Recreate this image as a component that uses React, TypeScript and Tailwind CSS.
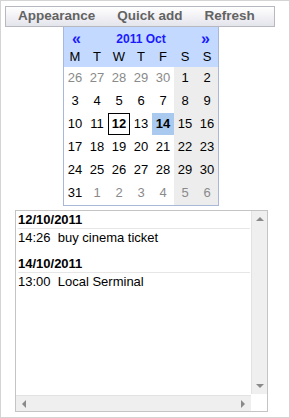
import React from 'react';

const weeks: { d: number; other?: boolean }[][] = [
  [{ d: 26, other: true }, { d: 27, other: true }, { d: 28, other: true }, { d: 29, other: true }, { d: 30, other: true }, { d: 1 }, { d: 2 }],
  [{ d: 3 }, { d: 4 }, { d: 5 }, { d: 6 }, { d: 7 }, { d: 8 }, { d: 9 }],
  [{ d: 10 }, { d: 11 }, { d: 12 }, { d: 13 }, { d: 14 }, { d: 15 }, { d: 16 }],
  [{ d: 17 }, { d: 18 }, { d: 19 }, { d: 20 }, { d: 21 }, { d: 22 }, { d: 23 }],
  [{ d: 24 }, { d: 25 }, { d: 26 }, { d: 27 }, { d: 28 }, { d: 29 }, { d: 30 }],
  [{ d: 31 }, { d: 1, other: true }, { d: 2, other: true }, { d: 3, other: true }, { d: 4, other: true }, { d: 5, other: true }, { d: 6, other: true }],
];

const events = [
  { date: '12/10/2011', time: '14:26', title: 'buy cinema ticket' },
  { date: '14/10/2011', time: '13:00', title: 'Local Serminal' },
];

function Calendar() {
  return (
    <div className="ml-[62px] w-[156px] border border-[#a8b8d8] border-t-0 bg-white">
      <div className="bg-[#c3d9ff] h-[40px]">
        <div className="flex items-center h-[22px] px-[8px] pt-[2px] text-[#1a1aff] font-bold">
          <span className="text-[16px] leading-none">«</span>
          <span className="flex-1 text-center text-[12px]">2011 Oct</span>
          <span className="text-[16px] leading-none">»</span>
        </div>
        <div className="grid grid-cols-7 h-[18px] text-[13px] leading-[16px] text-black">
          {['M', 'T', 'W', 'T', 'F', 'S', 'S'].map((n, i) => (
            <div key={i} className="text-center">{n}</div>
          ))}
        </div>
      </div>
      <div className="grid grid-cols-7 text-[13px]">
        {weeks.flat().map((c, i) => {
          const col = i % 7;
          const today = !c.other && c.d === 12;
          const sel = !c.other && c.d === 14;
          return (
            <div
              key={i}
              className={`h-[23px] flex items-start justify-center ${col >= 5 ? 'bg-[#ededed]' : ''}`}
            >
              <div
                className={`w-[22px] h-[22px] flex items-center justify-center ${
                  c.other ? 'text-[#8a8a8a]' : 'text-black'
                } ${today ? 'border border-black font-bold' : ''} ${sel ? 'bg-[#a9c9ee] font-bold' : ''}`}
              >
                {c.d}
              </div>
            </div>
          );
        })}
      </div>
    </div>
  );
}

function EventList() {
  return (
    <div className="mt-[4px] ml-[14px] w-[253px] h-[202px] border border-[#c4c4c4] bg-white relative">
      <div className="pl-[2px] pr-[17px] pt-[1px] text-[13px] text-black">
        {events.map((e) => (
          <div key={e.date} className="mb-[9px]">
            <div className="font-bold leading-[16px] border-b border-[#e6e6e6]">{e.date}</div>
            <div className="leading-[18px] whitespace-pre">{`${e.time}  ${e.title}`}</div>
          </div>
        ))}
      </div>
      <div className="absolute right-0 top-0 w-[16px] h-[183px] bg-[#efefef] border-l border-[#e2e2e2] flex flex-col items-center justify-between py-[6px]">
        <div className="w-0 h-0 border-l-[4px] border-r-[4px] border-b-[4px] border-l-transparent border-r-transparent border-b-[#8a8a8a]" />
        <div className="w-0 h-0 border-l-[4px] border-r-[4px] border-t-[4px] border-l-transparent border-r-transparent border-t-[#8a8a8a]" />
      </div>
      <div className="absolute left-0 bottom-0 w-[235px] h-[16px] bg-[#efefef] border-t border-[#e2e2e2] flex items-center justify-between px-[6px]">
        <div className="w-0 h-0 border-t-[4px] border-b-[4px] border-r-[4px] border-t-transparent border-b-transparent border-r-[#8a8a8a]" />
        <div className="w-0 h-0 border-t-[4px] border-b-[4px] border-l-[4px] border-t-transparent border-b-transparent border-l-[#8a8a8a]" />
      </div>
    </div>
  );
}

export default function App() {
  return (
    <div
      className="w-[290px] h-[418px] border border-[#d4d4d4] bg-white overflow-hidden"
      style={{ fontFamily: '"Liberation Sans", Arial, sans-serif' }}
    >
      <div className="mt-[5px] ml-[4px] w-[270px] h-[21px] border border-[#b8b8c0] bg-gradient-to-b from-white to-[#e4e4ec] flex items-center pl-[12px] gap-[22px] text-[13.5px] font-bold text-[#636363]">
        <span>Appearance</span>
        <span>Quick add</span>
        <span>Refresh</span>
      </div>
      <Calendar />
      <EventList />
    </div>
  );
}
